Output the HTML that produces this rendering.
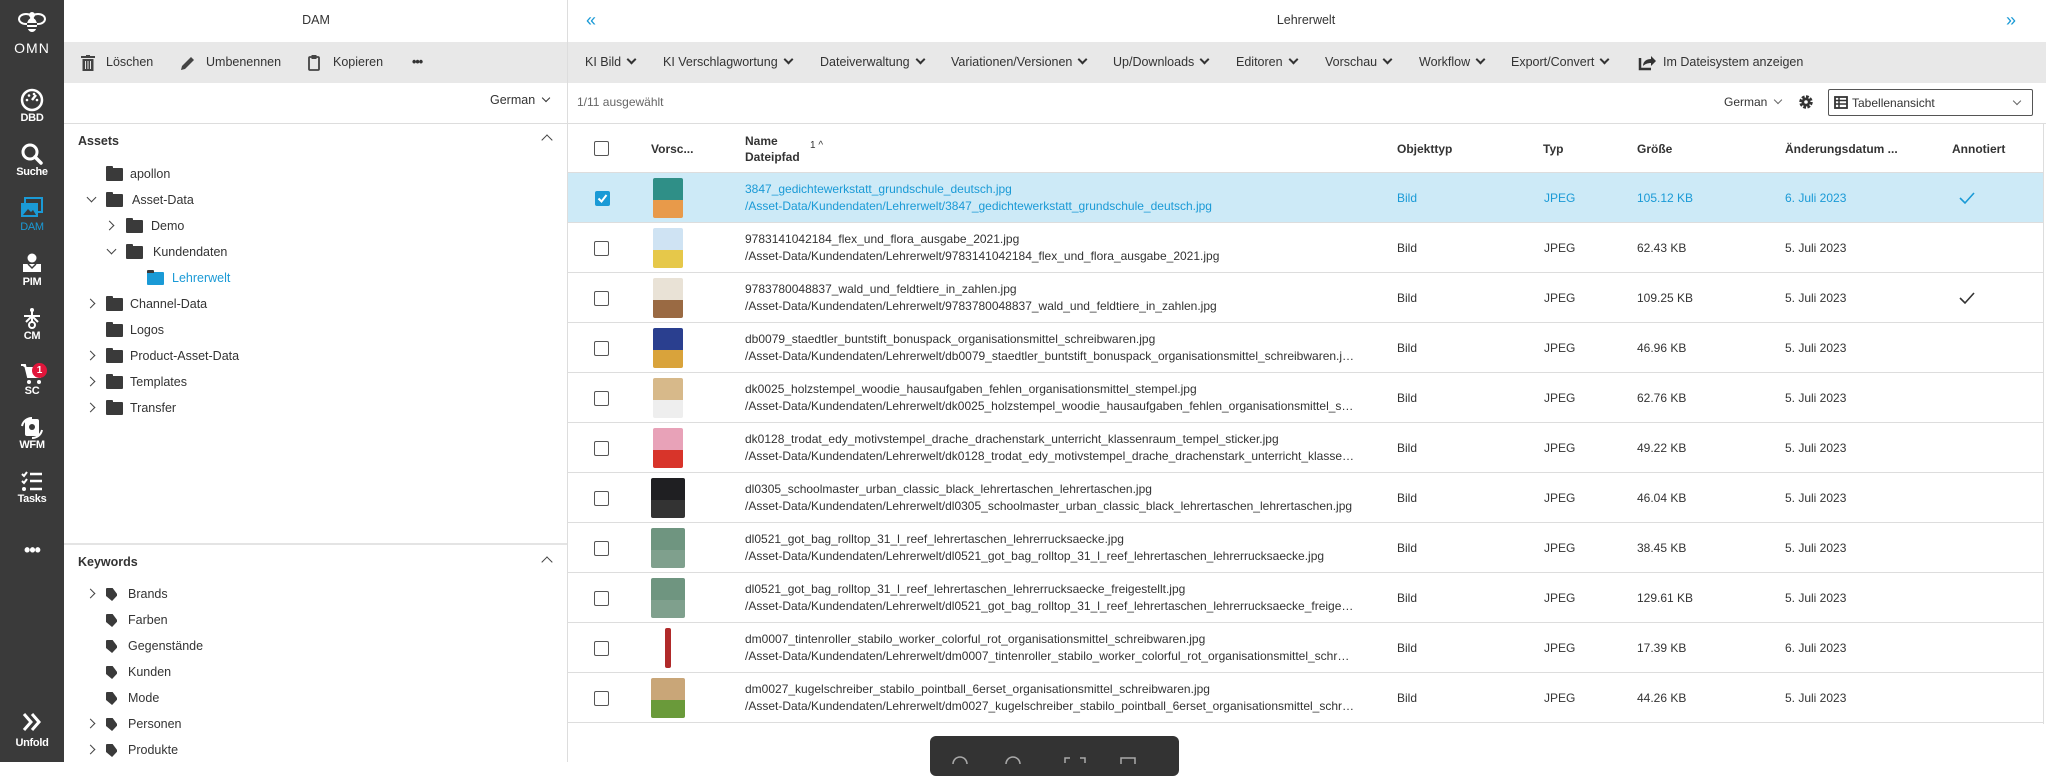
<!DOCTYPE html>
<html><head><meta charset="utf-8"><style>
*{box-sizing:border-box;margin:0;padding:0}
body{width:2046px;height:762px;overflow:hidden;background:#fff;font-family:"Liberation Sans",Arial,sans-serif;font-size:12.5px;color:#333;position:relative}
.a{position:absolute;white-space:nowrap}
#sb{position:absolute;left:0;top:0;width:64px;height:762px;background:#3a3a3a;color:#fff}
#sb .l{position:absolute;width:64px;text-align:center;font-size:11px;font-weight:bold;letter-spacing:-0.3px}
#sb svg{position:absolute;left:20px}
.gray{background:#e8e8e8}
.tree .r{position:absolute;height:20px;line-height:20px;font-size:12.5px}
.fold{display:inline-block;width:17px;height:13px;background:#3a3a3a;border-radius:1px;position:absolute;top:4px}
.fold:before{content:"";position:absolute;left:0;top:-2px;width:7px;height:3px;background:#3a3a3a;border-radius:1px 1px 0 0}
.cr{position:absolute;top:6px;width:7px;height:7px;border-right:1.5px solid #444;border-bottom:1.5px solid #444;transform:rotate(-45deg)}
.cd{position:absolute;top:4px;width:7px;height:7px;border-right:1.5px solid #444;border-bottom:1.5px solid #444;transform:rotate(45deg)}
.tb span{position:absolute;top:0;line-height:41px;font-size:12.5px;color:#333}
.dd{display:inline-block;width:7px;height:7px;border-right:2px solid #333;border-bottom:2px solid #333;transform:rotate(45deg);margin-left:7px;position:relative;top:-3px}
.row{position:absolute;left:568px;width:1476px;height:50px;border-bottom:1px solid #ddd}
.row div{position:absolute}
.row .n1{left:177px;top:9px;font-size:12px;white-space:nowrap;width:610px;overflow:hidden;text-overflow:ellipsis}
.row .n2{left:177px;top:26px;font-size:12px;white-space:nowrap;width:610px;overflow:hidden;text-overflow:ellipsis}
.row .c{top:18px;font-size:12px}
.sel{background:#cdeaf7;color:#1a9ad6}
.tag{position:absolute;width:11px;height:13px;background:#3a3a3a;top:4px;clip-path:polygon(0 0,60% 0,100% 45%,100% 60%,55% 100%,0 62%);border-radius:1px}
</style></head><body>

<div id="sb">
 <svg style="left:18px;top:10px" width="28" height="24" viewBox="0 0 28 24"><ellipse cx="8" cy="9" rx="7" ry="5" fill="none" stroke="#fff" stroke-width="2"/><ellipse cx="20" cy="9" rx="7" ry="5" fill="none" stroke="#fff" stroke-width="2"/><ellipse cx="14" cy="15" rx="5" ry="7" fill="#fff"/><rect x="9" y="13" width="10" height="2" fill="#3a3a3a"/><rect x="9" y="17" width="10" height="2" fill="#3a3a3a"/><circle cx="14" cy="5" r="3" fill="#fff"/></svg>
 <div class="l" style="top:40px;font-size:14px;font-weight:normal;letter-spacing:1px">OMN</div>
 <svg style="top:88px" width="24" height="24" viewBox="0 0 24 24"><circle cx="12" cy="12" r="10" fill="none" stroke="#fff" stroke-width="2.5"/><path d="M12 12 L16 7" stroke="#fff" stroke-width="2.5"/><circle cx="7" cy="12" r="1.3" fill="#fff"/><circle cx="9" cy="7.5" r="1.3" fill="#fff"/><circle cx="14" cy="6" r="1.3" fill="#fff"/><circle cx="17" cy="12" r="1.3" fill="#fff"/></svg>
 <div class="l" style="top:112px">DBD</div>
 <svg style="top:142px" width="24" height="24" viewBox="0 0 24 24"><circle cx="10" cy="10" r="7" fill="none" stroke="#fff" stroke-width="3"/><path d="M15 15 L21 21" stroke="#fff" stroke-width="3.5" stroke-linecap="round"/></svg>
 <div class="l" style="top:166px">Suche</div>
 <svg style="top:197px" width="24" height="22" viewBox="0 0 24 22"><rect x="5" y="1" width="17" height="14" fill="none" stroke="#1a9ad6" stroke-width="2"/><rect x="1" y="6" width="17" height="14" fill="#1a9ad6"/><path d="M3 18 L8 12 L11 15 L13 13 L16 18Z" fill="#3a3a3a"/></svg>
 <div class="l" style="top:221px;color:#1a9ad6;font-weight:normal">DAM</div>
 <svg style="top:253px" width="24" height="22" viewBox="0 0 24 22"><circle cx="12" cy="5" r="4.5" fill="#fff"/><path d="M3 11 L21 11 L21 19 L3 19Z" fill="#fff"/><path d="M8 11 L12 15 L16 11" fill="none" stroke="#3a3a3a" stroke-width="1.5"/></svg>
 <div class="l" style="top:276px">PIM</div>
 <svg style="top:307px" width="24" height="24" viewBox="0 0 24 24"><path d="M12 2 L12 16 M4 9 L20 9 M12 9 L6 15 M12 9 L18 15" stroke="#fff" stroke-width="2"/><circle cx="12" cy="18" r="3" fill="none" stroke="#fff" stroke-width="2"/><circle cx="12" cy="3" r="2" fill="#fff"/></svg>
 <div class="l" style="top:330px">CM</div>
 <svg style="top:362px" width="26" height="24" viewBox="0 0 26 24"><path d="M1 3 L5 3 L8 15 L20 15 L23 6 L6 6" fill="#fff" stroke="#fff" stroke-width="2"/><circle cx="9" cy="20" r="2" fill="#fff"/><circle cx="19" cy="20" r="2" fill="#fff"/></svg>
 <div style="position:absolute;left:32px;top:363px;width:15px;height:15px;border-radius:50%;background:#e0163b;color:#fff;font-size:10px;font-weight:bold;text-align:center;line-height:15px">1</div>
 <div class="l" style="top:385px">SC</div>
 <svg style="top:416px" width="24" height="24" viewBox="0 0 24 24"><rect x="5" y="3" width="14" height="17" rx="2" fill="#fff"/><path d="M2 10 A10 10 0 0 1 12 2 M22 14 A10 10 0 0 1 12 22" fill="none" stroke="#fff" stroke-width="2"/><circle cx="12" cy="11" r="3" fill="#3a3a3a"/></svg>
 <div class="l" style="top:439px">WFM</div>
 <svg style="top:470px" width="24" height="24" viewBox="0 0 24 24"><path d="M2 4 L4 6 L7 2 M2 11 L4 13 L7 9" stroke="#fff" stroke-width="2" fill="none"/><circle cx="4" cy="19" r="2" fill="#fff"/><path d="M10 4 H22 M10 11 H22 M10 19 H22" stroke="#fff" stroke-width="2.5"/></svg>
 <div class="l" style="top:493px">Tasks</div>
 <div class="l" style="top:540px;font-size:18px;letter-spacing:-1px">•••</div>
 <svg style="top:712px" width="24" height="20" viewBox="0 0 24 20"><path d="M4 2 L11 10 L4 18 M12 2 L19 10 L12 18" stroke="#fff" stroke-width="3" fill="none"/></svg>
 <div class="l" style="top:737px">Unfold</div>
</div>

<div class="a" style="left:64px;top:0;width:504px;height:42px;line-height:40px;text-align:center;font-size:12.5px">DAM</div>
<div class="a gray tb" style="left:64px;top:42px;width:504px;height:41px">
 <svg style="position:absolute;left:17px;top:13px" width="14" height="16" viewBox="0 0 14 16"><rect x="0" y="1" width="14" height="2" fill="#444"/><rect x="5" y="0" width="4" height="2" fill="#444"/><path d="M1.5 4 H12.5 V16 H1.5Z" fill="#444"/><path d="M4.5 6 V14 M7 6 V14 M9.5 6 V14" stroke="#e8e8e8" stroke-width="1"/></svg>
 <span style="left:42px">Löschen</span>
 <svg style="position:absolute;left:116px;top:13px" width="16" height="16" viewBox="0 0 16 16"><path d="M1 15 L2 11 L11 2 L14 5 L5 14Z" fill="#444"/></svg>
 <span style="left:142px">Umbenennen</span>
 <svg style="position:absolute;left:244px;top:12px" width="12" height="17" viewBox="0 0 12 17"><rect x="1" y="3" width="10" height="13" rx="1" fill="none" stroke="#444" stroke-width="1.8"/><rect x="3.5" y="1" width="5" height="4" fill="#444"/></svg>
 <span style="left:269px">Kopieren</span>
 <span style="left:348px;font-weight:bold;letter-spacing:-1px">•••</span>
</div>
<div class="a" style="left:490px;top:93px;font-size:12.5px">German <span class="dd" style="width:6px;height:6px;border-width:1px;margin-left:4px"></span></div>
<div class="a" style="left:64px;top:123px;width:504px;height:1px;background:#ddd"></div>
<div class="a" style="left:78px;top:134px;font-weight:bold;font-size:12.5px">Assets</div>
<div class="a" style="left:543px;top:136px;width:8px;height:8px;border-left:1.5px solid #444;border-top:1.5px solid #444;transform:rotate(45deg)"></div>

<div class="tree">
 <div class="r" style="left:0;top:164px"><i class="fold" style="left:106px"></i><span class="a" style="left:130px;top:0">apollon</span></div>
 <div class="r" style="left:0;top:190px"><i class="cd" style="left:88px"></i><i class="fold" style="left:106px"></i><span class="a" style="left:132px;top:0">Asset-Data</span></div>
 <div class="r" style="left:0;top:216px"><i class="cr" style="left:106px"></i><i class="fold" style="left:126px"></i><span class="a" style="left:151px;top:0">Demo</span></div>
 <div class="r" style="left:0;top:242px"><i class="cd" style="left:108px"></i><i class="fold" style="left:126px"></i><span class="a" style="left:153px;top:0">Kundendaten</span></div>
 <div class="r" style="left:0;top:268px"><i class="fold" style="left:147px;background:#1a9ad6"></i><span class="a" style="left:172px;top:0;color:#1a9ad6">Lehrerwelt</span></div>
 <div class="r" style="left:0;top:294px"><i class="cr" style="left:87px"></i><i class="fold" style="left:106px"></i><span class="a" style="left:130px;top:0">Channel-Data</span></div>
 <div class="r" style="left:0;top:320px"><i class="fold" style="left:106px"></i><span class="a" style="left:130px;top:0">Logos</span></div>
 <div class="r" style="left:0;top:346px"><i class="cr" style="left:87px"></i><i class="fold" style="left:106px"></i><span class="a" style="left:130px;top:0">Product-Asset-Data</span></div>
 <div class="r" style="left:0;top:372px"><i class="cr" style="left:87px"></i><i class="fold" style="left:106px"></i><span class="a" style="left:130px;top:0">Templates</span></div>
 <div class="r" style="left:0;top:398px"><i class="cr" style="left:87px"></i><i class="fold" style="left:106px"></i><span class="a" style="left:130px;top:0">Transfer</span></div>
</div>
<div class="a" style="left:64px;top:543px;width:504px;height:2px;background:#e4e4e4"></div>
<div class="a" style="left:78px;top:555px;font-weight:bold;font-size:12.5px">Keywords</div>
<div class="a" style="left:543px;top:558px;width:8px;height:8px;border-left:1.5px solid #444;border-top:1.5px solid #444;transform:rotate(45deg)"></div>
<div class="tree">
 <div class="r" style="left:0;top:584px"><i class="cr" style="left:87px"></i><i class="tag" style="left:106px"></i><span class="a" style="left:128px;top:0">Brands</span></div>
 <div class="r" style="left:0;top:610px"><i class="tag" style="left:106px"></i><span class="a" style="left:128px;top:0">Farben</span></div>
 <div class="r" style="left:0;top:636px"><i class="tag" style="left:106px"></i><span class="a" style="left:128px;top:0">Gegenstände</span></div>
 <div class="r" style="left:0;top:662px"><i class="tag" style="left:106px"></i><span class="a" style="left:128px;top:0">Kunden</span></div>
 <div class="r" style="left:0;top:688px"><i class="tag" style="left:106px"></i><span class="a" style="left:128px;top:0">Mode</span></div>
 <div class="r" style="left:0;top:714px"><i class="cr" style="left:87px"></i><i class="tag" style="left:106px"></i><span class="a" style="left:128px;top:0">Personen</span></div>
 <div class="r" style="left:0;top:740px"><i class="cr" style="left:87px"></i><i class="tag" style="left:106px"></i><span class="a" style="left:128px;top:0">Produkte</span></div>
</div>
<div class="a" style="left:567px;top:0;width:1px;height:762px;background:#ddd"></div>

<div class="a" style="left:586px;top:10px;color:#1a9ad6;font-size:18px">«</div>
<div class="a" style="left:568px;top:0;width:1476px;line-height:40px;text-align:center">Lehrerwelt</div>
<div class="a" style="left:2006px;top:10px;color:#1a9ad6;font-size:18px">»</div>
<div class="a gray tb" style="left:568px;top:42px;width:1478px;height:41px">
 <span style="left:17px">KI Bild<i class="dd"></i></span>
 <span style="left:95px">KI Verschlagwortung<i class="dd"></i></span>
 <span style="left:252px">Dateiverwaltung<i class="dd"></i></span>
 <span style="left:383px">Variationen/Versionen<i class="dd"></i></span>
 <span style="left:545px">Up/Downloads<i class="dd"></i></span>
 <span style="left:668px">Editoren<i class="dd"></i></span>
 <span style="left:757px">Vorschau<i class="dd"></i></span>
 <span style="left:851px">Workflow<i class="dd"></i></span>
 <span style="left:943px">Export/Convert<i class="dd"></i></span>
 <svg style="position:absolute;left:1070px;top:12px" width="18" height="17" viewBox="0 0 18 17"><path d="M2 4 V15 H13" stroke="#333" stroke-width="2.5" fill="none"/><path d="M5 12 C5 7 9 5 13 5 V2 L18 7 L13 12 V9 C10 9 7 10 5 12Z" fill="#333"/></svg>
 <span style="left:1095px">Im Dateisystem anzeigen</span>
</div>
<div class="a" style="left:577px;top:95px;color:#666;font-size:12px">1/11 ausgewählt</div>
<div class="a" style="left:1724px;top:95px;font-size:12px">German <span class="dd" style="width:6px;height:6px;border-width:1px;margin-left:4px;border-color:#666"></span></div>
<svg class="a" style="left:1798px;top:94px" width="16" height="16" viewBox="0 0 16 16"><circle cx="8" cy="8" r="5" fill="none" stroke="#333" stroke-width="3.5" stroke-dasharray="2.6 1.3"/><circle cx="8" cy="8" r="4.5" fill="#333"/><circle cx="8" cy="8" r="1.8" fill="#fff"/></svg>
<div class="a" style="left:1828px;top:89px;width:205px;height:27px;border:1px solid #555;border-radius:2px">
 <svg style="position:absolute;left:5px;top:6px" width="14" height="13" viewBox="0 0 14 13"><rect x="1" y="1" width="12" height="11" fill="none" stroke="#333" stroke-width="1.8"/><path d="M1 4.5 H13 M1 8 H13 M5 1 V12" stroke="#333" stroke-width="1.5"/></svg>
 <span style="position:absolute;left:23px;top:6px;font-size:12px">Tabellenansicht</span>
 <span class="dd" style="position:absolute;right:12px;top:8px;width:6px;height:6px;border-width:1px;border-color:#666"></span>
</div>
<div class="a" style="left:568px;top:123px;width:1478px;height:1px;background:#ddd"></div>

<div class="a" style="left:594px;top:141px;width:15px;height:15px;border:1.5px solid #555;border-radius:2px"></div>
<div class="a" style="left:651px;top:142px;font-weight:bold;font-size:12px">Vorsc...</div>
<div class="a" style="left:745px;top:133px;font-weight:bold;font-size:12px;line-height:16px">Name<br>Dateipfad</div>
<div class="a" style="left:810px;top:140px;font-size:10px">1 ^</div>
<div class="a" style="left:1397px;top:142px;font-weight:bold;font-size:12px">Objekttyp</div>
<div class="a" style="left:1543px;top:142px;font-weight:bold;font-size:12px">Typ</div>
<div class="a" style="left:1637px;top:142px;font-weight:bold;font-size:12px">Größe</div>
<div class="a" style="left:1785px;top:142px;font-weight:bold;font-size:12px">Änderungsdatum ...</div>
<div class="a" style="left:1952px;top:142px;font-weight:bold;font-size:12px">Annotiert</div>
<div class="a" style="left:568px;top:172px;width:1476px;height:1px;background:#ddd"></div>

<div id="rows"></div>
<script>
const R=[
["3847_gedichtewerkstatt_grundschule_deutsch.jpg","105.12 KB","6. Juli 2023",1,1,"#2f8f87","#e89a4a"],
["9783141042184_flex_und_flora_ausgabe_2021.jpg","62.43 KB","5. Juli 2023",0,0,"#cfe3f3","#e6c84a"],
["9783780048837_wald_und_feldtiere_in_zahlen.jpg","109.25 KB","5. Juli 2023",0,1,"#e9e2d6","#9a6a43"],
["db0079_staedtler_buntstift_bonuspack_organisationsmittel_schreibwaren.jpg","46.96 KB","5. Juli 2023",0,0,"#2a3f8f","#d9a33b"],
["dk0025_holzstempel_woodie_hausaufgaben_fehlen_organisationsmittel_stempel.jpg","62.76 KB","5. Juli 2023",0,0,"#d7b98a","#eeeeee"],
["dk0128_trodat_edy_motivstempel_drache_drachenstark_unterricht_klassenraum_tempel_sticker.jpg","49.22 KB","5. Juli 2023",0,0,"#e8a2b8","#d8342a"],
["dl0305_schoolmaster_urban_classic_black_lehrertaschen_lehrertaschen.jpg","46.04 KB","5. Juli 2023",0,0,"#1f1f22","#333"],
["dl0521_got_bag_rolltop_31_l_reef_lehrertaschen_lehrerrucksaecke.jpg","38.45 KB","5. Juli 2023",0,0,"#6f9580","#7fa08d"],
["dl0521_got_bag_rolltop_31_l_reef_lehrertaschen_lehrerrucksaecke_freigestellt.jpg","129.61 KB","5. Juli 2023",0,0,"#6f9580","#7fa08d"],
["dm0007_tintenroller_stabilo_worker_colorful_rot_organisationsmittel_schreibwaren.jpg","17.39 KB","6. Juli 2023",0,0,"#b02a2a","#b02a2a"],
["dm0027_kugelschreiber_stabilo_pointball_6erset_organisationsmittel_schreibwaren.jpg","44.26 KB","5. Juli 2023",0,0,"#c9a678","#6a9a3a"]];
let h="";
R.forEach((r,i)=>{const top=173+i*50;const s=r[3];
const w=(i==9)?6:(i>=6?34:30);
h+=`<div class="row${s?' sel':''}" style="top:${top}px">
<div style="left:${s?27:26}px;top:18px;width:15px;height:15px;border-radius:2px;${s?'background:#1a9ad6':'border:1.5px solid #555'}">${s?'<svg width="15" height="15" viewBox="0 0 15 15" style="position:absolute;left:0;top:0"><path d="M3.5 7.5 L6.5 10.5 L11.5 4" stroke="#fff" stroke-width="2" fill="none"/></svg>':''}</div>
<div style="left:${100-w/2}px;top:5px;width:${w}px;height:40px;background:linear-gradient(${r[5]} 0 55%,${r[6]} 55% 100%);border-radius:2px"></div>
<div class="n1">${r[0]}</div><div class="n2">/Asset-Data/Kundendaten/Lehrerwelt/${r[0]}</div>
<div class="c" style="left:829px">Bild</div><div class="c" style="left:976px">JPEG</div>
<div class="c" style="left:1069px">${r[1]}</div><div class="c" style="left:1217px">${r[2]}</div>
${r[4]?`<svg style="position:absolute;left:1391px;top:18px" width="16" height="14" viewBox="0 0 16 14"><path d="M1 7 L6 12 L15 2" stroke="${s?'#1a9ad6':'#333'}" stroke-width="1.6" fill="none"/></svg>`:''}
</div>`;});
document.getElementById('rows').innerHTML=h;
</script>
<div class="a" style="left:2043px;top:124px;width:1px;height:600px;background:#ddd"></div>
<div class="a" style="left:930px;top:736px;width:249px;height:40px;background:#333;border-radius:6px">
 <svg style="position:absolute;left:20px;top:18px" width="210" height="10" viewBox="0 0 210 10"><circle cx="10" cy="10" r="7" fill="none" stroke="#aaa" stroke-width="1.5"/><circle cx="63" cy="10" r="7" fill="none" stroke="#aaa" stroke-width="1.5"/><path d="M115 9 V4 H120 M130 4 H135 V9" stroke="#aaa" stroke-width="1.5" fill="none"/><rect x="171" y="4" width="14" height="10" fill="none" stroke="#aaa" stroke-width="1.5"/></svg>
</div>
</body></html>
